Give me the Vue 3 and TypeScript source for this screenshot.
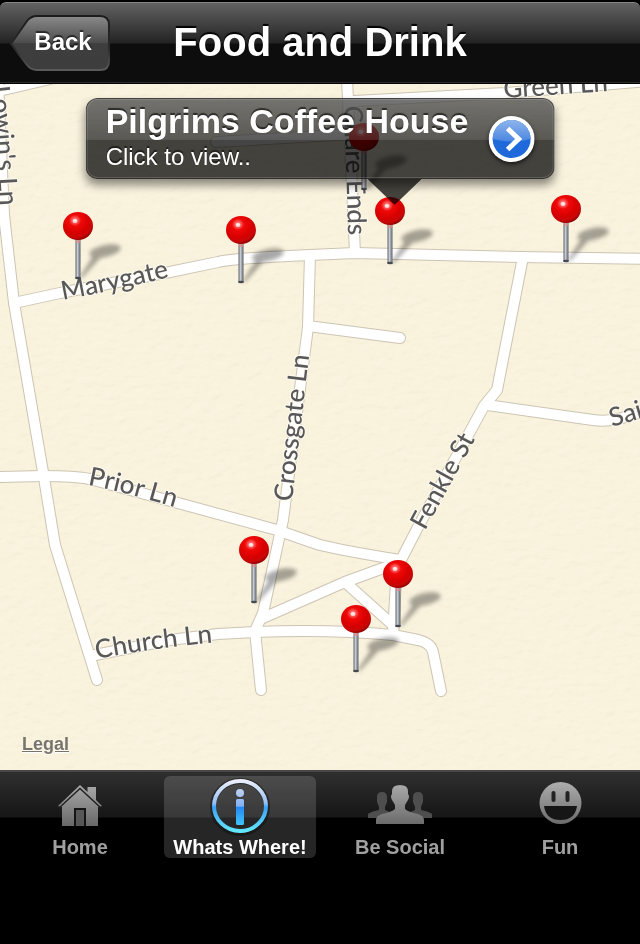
<script setup lang="ts">
interface Pin {
  x: number
  y: number
}

interface StreetLabel {
  id: string
  name: string
  path: string
}

interface Tab {
  id: string
  label: string
}

const roads: string[] = [
  'M-2 80 L4 215 L14 303 L44 478 L55 545 L97 680',
  'M-10 93 L50 79',
  'M14 303 L60 293 L170 272 L218 262 Q235 258 310 255 L355 253 L520 257 L650 259',
  'M347 78 L355 253',
  'M354 101 L505 93 L650 81',
  'M216 142 L354 134',
  'M310 255 L308 327 L283 520 L263 613 L255 631 L261 690',
  'M308 326 L400 338',
  'M523 257 L497 390 L484 406 L418 527 L402 558',
  'M487 405 L593 420 Q608 422 622 418 L650 409',
  'M-6 477 L43 476 Q75 476 90 479 L277 530 Q305 540 320 545 Q340 550 400 560',
  'M263 618 L345 582 L400 562',
  'M346 583 L394 626',
  'M397 562 L393 635',
  'M90 656 L170 640 L218 634 L255 632 Q330 629 393 635 L418 640 Q431 643 433 652 L441 691',
]

const labels: StreetLabel[] = [
  { id: 'marygate', name: 'Marygate', path: 'M63 300 Q118 290 190 272' },
  { id: 'prior', name: 'Prior Ln', path: 'M88 485 Q130 493 200 515' },
  { id: 'church', name: 'Church Ln', path: 'M97 659 Q150 648 240 640' },
  { id: 'crossgate', name: 'Crossgate Ln', path: 'M292 502 L312 330' },
  { id: 'fenkle', name: 'Fenkle St', path: 'M425 531 L490 412' },
  { id: 'saint', name: 'Saint', path: 'M612 427 L690 404' },
  { id: 'green', name: 'Green Ln', path: 'M504 98 L640 89' },
  { id: 'chare', name: 'Chare Ends', path: 'M344 106 L349 260' },
  { id: 'lowin', name: "Lowin's Ln", path: 'M-9 87 Q-4 130 1 230' },
]

const pins: Pin[] = [
  { x: 364, y: 137 },
  { x: 78, y: 226 },
  { x: 241, y: 230 },
  { x: 390, y: 211 },
  { x: 566, y: 209 },
  { x: 254, y: 550 },
  { x: 398, y: 574 },
  { x: 356, y: 619 },
]

const tabs: Tab[] = [
  { id: 'home', label: 'Home' },
  { id: 'info', label: 'Whats Where!' },
  { id: 'social', label: 'Be Social' },
  { id: 'fun', label: 'Fun' },
]

const activeTab = 'info'
</script>

<template>
  <div class="app">
    <header class="bar">
      <button class="back" type="button">
        <svg class="back-shape" viewBox="0 0 100 56" preserveAspectRatio="none" aria-hidden="true">
          <defs>
            <linearGradient id="backFill" x1="0" y1="0" x2="0" y2="1">
              <stop offset="0" stop-color="#8a8a8a" />
              <stop offset="0.5" stop-color="#4c4c4c" />
              <stop offset="0.51" stop-color="#3e3e3e" />
              <stop offset="1" stop-color="#3d3d3d" />
            </linearGradient>
            <linearGradient id="backEdge" x1="0" y1="0" x2="0" y2="1">
              <stop offset="0" stop-color="#1c1c1c" />
              <stop offset="0.6" stop-color="#2a2a2a" />
              <stop offset="1" stop-color="#5a5a5a" />
            </linearGradient>
          </defs>
          <path
            d="M1 29 L17 6 Q21 1 27 1 H90 Q99 1 99 10 V46 Q99 55 90 55 H27 Q21 55 17 50 Z"
            fill="url(#backFill)" stroke="url(#backEdge)" stroke-width="2"
          />
        </svg>
        <span class="back-text">Back</span>
      </button>
      <h1 class="title">Food and Drink</h1>
    </header>

    <main class="map">
      <svg class="map-canvas" viewBox="0 84 640 686" preserveAspectRatio="xMidYMin slice" role="img" aria-label="Street map">
        <defs>
          <filter id="paper" x="0" y="0" width="100%" height="100%">
            <feTurbulence type="fractalNoise" baseFrequency="0.08 0.14" numOctaves="3" seed="4" result="n" />
            <feDiffuseLighting in="n" surfaceScale="1" diffuseConstant="1.06" lighting-color="#fffdf4">
              <feDistantLight azimuth="235" elevation="72" />
            </feDiffuseLighting>
          </filter>
          <filter id="soft" x="-30%" y="-30%" width="160%" height="160%">
            <feGaussianBlur stdDeviation="2" />
          </filter>
          <radialGradient id="ball" cx="0.4" cy="0.3" r="0.72">
            <stop offset="0" stop-color="#ffd0d0" />
            <stop offset="0.1" stop-color="#ff7070" />
            <stop offset="0.28" stop-color="#f00808" />
            <stop offset="0.65" stop-color="#d60000" />
            <stop offset="0.85" stop-color="#c80808" />
            <stop offset="1" stop-color="#8c0000" />
          </radialGradient>
          <linearGradient id="needle" x1="0" y1="0" x2="1" y2="0">
            <stop offset="0" stop-color="#60646b" />
            <stop offset="0.4" stop-color="#c6cad2" />
            <stop offset="1" stop-color="#5a5e66" />
          </linearGradient>
          <path v-for="l in labels" :id="'street-' + l.id" :key="l.id" :d="l.path" />
        </defs>

        <rect x="0" y="84" width="640" height="686" fill="#f9f3e1" />
        <rect class="paper" x="0" y="84" width="640" height="686" filter="url(#paper)" />

        <g class="road-edge">
          <path v-for="r in roads" :key="r" :d="r" />
        </g>
        <g class="road">
          <path v-for="r in roads" :key="r" :d="r" />
        </g>

        <text v-for="l in labels" :key="l.id" class="street">
          <textPath :href="'#street-' + l.id">{{ l.name }}</textPath>
        </text>

        <g v-for="p in pins" :key="p.x" :transform="`translate(${p.x} ${p.y})`">
          <g filter="url(#soft)" fill="#000" opacity="0.34">
            <ellipse cx="27" cy="25" rx="16" ry="6" transform="rotate(-12 27 25)" />
            <path d="M1 52 L17 27 L25 29 L4 52 Z" />
          </g>
          <rect x="-2.5" y="12" width="5" height="40" fill="url(#needle)" />
          <ellipse cx="0" cy="52" rx="3" ry="1.3" fill="#454951" />
          <rect x="-2" y="13" width="4" height="4" fill="#e08a8a" opacity="0.7" />
          <ellipse cx="0" cy="0" rx="15" ry="14" fill="url(#ball)" />
          <ellipse cx="-3" cy="-5" rx="2.4" ry="2" fill="#fff" opacity="0.7" />
        </g>
      </svg>

      <section class="callout">
        <div class="callout-text">
          <h2 class="callout-title">Pilgrims Coffee House</h2>
          <p class="callout-sub">Click to view..</p>
        </div>
        <button class="disclose" type="button" aria-label="View details">
          <svg viewBox="0 0 46 46" aria-hidden="true">
            <defs>
              <linearGradient id="blueTop" x1="0" y1="0" x2="0" y2="1">
                <stop offset="0" stop-color="#8fb5ec" />
                <stop offset="1" stop-color="#4a86e0" />
              </linearGradient>
            </defs>
            <circle cx="23" cy="23" r="23" fill="#fff" />
            <circle cx="23" cy="23" r="19" fill="#1f69da" />
            <path d="M4 23 A19 19 0 0 1 42 23 Q23 28 4 23 Z" fill="url(#blueTop)" />
            <path d="M19 12.500 L30 23 L19 33.500" fill="none" stroke="#fff" stroke-width="5" />
          </svg>
        </button>
        <svg class="callout-tip" viewBox="0 0 54 26" aria-hidden="true">
          <path d="M0 0 H54 L28 25 Q27 26 26 25 Z" fill="#000" fill-opacity="0.73" />
        </svg>
      </section>

      <a class="legal" href="#legal">Legal</a>
    </main>

    <nav class="tabs">
      <button
        v-for="t in tabs" :key="t.id" type="button"
        class="tab" :class="{ active: t.id === activeTab }"
      >
        <svg v-if="t.id === 'home'" class="icon" viewBox="0 0 64 60" aria-hidden="true">
          <defs>
            <linearGradient id="metal" gradientUnits="userSpaceOnUse" x1="0" y1="8" x2="0" y2="50">
              <stop offset="0" stop-color="#aaaaaa" />
              <stop offset="1" stop-color="#686868" />
            </linearGradient>
          </defs>
          <path d="M32 9 L39.500 16 V11 H48 V24 L54 30 L50 31 V50 H14 V31 L10 30 Z" fill="url(#metal)" />
          <path d="M11 32 L32 12.500 L53 32" fill="none" stroke="#222" stroke-width="1.500" />
          <rect x="26" y="32" width="12" height="18" fill="#141414" />
          <rect x="28" y="34" width="8" height="16" fill="#575757" />
        </svg>
        <svg v-else-if="t.id === 'info'" class="icon" viewBox="0 0 64 60" aria-hidden="true">
          <defs>
            <linearGradient id="ring" gradientUnits="userSpaceOnUse" x1="0" y1="3" x2="0" y2="57">
              <stop offset="0" stop-color="#f1f3fb" />
              <stop offset="0.45" stop-color="#93c0f4" />
              <stop offset="0.52" stop-color="#3aa2f6" />
              <stop offset="1" stop-color="#66ecff" />
            </linearGradient>
            <linearGradient id="stem" gradientUnits="userSpaceOnUse" x1="0" y1="12" x2="0" y2="50">
              <stop offset="0" stop-color="#c3d4f5" />
              <stop offset="0.48" stop-color="#84b0f0" />
              <stop offset="0.5" stop-color="#2088f4" />
              <stop offset="1" stop-color="#45c8fb" />
            </linearGradient>
          </defs>
          <ellipse cx="32" cy="31" rx="27" ry="26" fill="none" stroke="#0d0d0d" stroke-width="6" opacity="0.5" />
          <ellipse cx="32" cy="30" rx="26" ry="25" fill="none" stroke="url(#ring)" stroke-width="4" />
          <circle cx="32" cy="17" r="4" fill="url(#stem)" />
          <rect x="28" y="23" width="8" height="26" rx="1.500" fill="url(#stem)" />
        </svg>
        <svg v-else-if="t.id === 'social'" class="icon" viewBox="0 0 64 60" aria-hidden="true">
          <g fill="#4e4e4e">
            <path d="M9 21 Q9 16 14 16 Q19 16 19 21 V26 L17 31 V34 L24 37 V42 H0 V38 Q2 36 11 34 V31 L9 26 Z" />
            <path d="M55 21 Q55 16 50 16 Q45 16 45 21 V26 L47 31 V34 L40 37 V42 H64 V38 Q62 36 53 34 V31 L55 26 Z" />
          </g>
          <path
            d="M24 15 Q24 9 32 9 Q40 9 40 15 V18 Q42 20 40 24 L37 29 V33 Q40 36 50 38 Q56 40 56 44 V48 H8 V44 Q8 40 14 38 Q24 36 27 33 V29 L24 24 Q22 20 24 18 Z"
            fill="url(#metal)"
          />
        </svg>
        <svg v-else class="icon" viewBox="0 0 64 60" aria-hidden="true">
          <circle cx="32.500" cy="27" r="21" fill="url(#metal)" />
          <rect x="23.500" y="15" width="4" height="11" rx="2" fill="#222" />
          <rect x="37.500" y="15" width="4" height="11" rx="2" fill="#222" />
          <path d="M16 30 H49 Q47 44 32.500 44 Q18 44 16 30 Z" fill="#161616" />
        </svg>
        <span class="tab-label">{{ t.label }}</span>
      </button>
    </nav>
  </div>
</template>

<style>
body {
  margin: 0;
  background: #000;
}
</style>

<style scoped>
.app {
  display: flex;
  flex-direction: column;
  min-height: 100vh;
  background: #000;
  font-family: "Liberation Sans", Arial, sans-serif;
}

button {
  border: 0;
  margin: 0;
  padding: 0;
  background: none;
  color: inherit;
  font-family: inherit;
}

.bar {
  display: grid;
  grid-template-columns: 1fr auto 1fr;
  align-items: center;
  height: 81px;
  padding: 0 10px;
  margin-top: 2px;
  box-sizing: border-box;
  border-top: 1px solid #858585;
  border-bottom: 1px solid #2c2c2c;
  border-radius: 6px 6px 0 0;
  background: linear-gradient(#626262 0, #232323 40px, #0d0d0d 41px, #0d0d0d 100%);
}

.back {
  position: relative;
  width: 100px;
  height: 56px;
}

.back-shape {
  display: block;
  width: 100%;
  height: 100%;
}

.back-text {
  position: absolute;
  inset: 0 0 2px 6px;
  display: flex;
  align-items: center;
  justify-content: center;
  color: #fff;
  font-size: 24px;
  font-weight: bold;
  text-shadow: 0 -2px 1px rgba(0, 0, 0, 0.6);
}

.title {
  grid-column: 2;
  margin: 0;
  padding-bottom: 2px;
  color: #fff;
  font-size: 40px;
  line-height: 48px;
  font-weight: bold;
  white-space: nowrap;
  text-shadow: 0 -2px 1px #000;
}

.map {
  position: relative;
  flex: 1;
  min-height: 400px;
  margin-top: 1px;
  overflow: hidden;
  background: #f8f1de;
}

.map-canvas {
  position: absolute;
  inset: 0;
  width: 100%;
  height: 100%;
}

.paper {
  mix-blend-mode: multiply;
  opacity: 0.35;
}

.road-edge path,
.road path {
  fill: none;
  stroke-linecap: round;
  stroke-linejoin: round;
}

.road-edge path {
  stroke: #cdc4b3;
  stroke-width: 12px;
}

.road path {
  stroke: #fff;
  stroke-width: 10px;
}

.street {
  fill: #58585a;
  stroke: #fdfaf0;
  stroke-width: 2px;
  stroke-linejoin: round;
  paint-order: stroke;
  font-family: Lato, "Open Sans", sans-serif;
  font-size: 26px;
  font-weight: 500;
}

.callout {
  position: absolute;
  top: 14px;
  left: 50%;
  transform: translateX(-50%);
  display: flex;
  align-items: center;
  gap: 20px;
  height: 81px;
  padding: 0 20px;
  box-sizing: border-box;
  border-radius: 12px;
  color: #fff;
  white-space: nowrap;
  background:
    linear-gradient(rgba(255, 255, 255, 0.26), rgba(255, 255, 255, 0.12)) 0 0 / 100% 42px no-repeat,
    rgba(0, 0, 0, 0.73);
  box-shadow:
    inset 0 0 0 1px rgba(0, 0, 0, 0.5),
    inset 0 0 0 2px rgba(255, 255, 255, 0.14),
    0 6px 10px rgba(0, 0, 0, 0.45);
}

.callout-title {
  margin: 0;
  font-size: 34px;
  line-height: 40px;
  font-weight: bold;
  text-shadow: 0 -2px 1px rgba(0, 0, 0, 0.6);
}

.callout-sub {
  margin: 0;
  padding-bottom: 4px;
  font-size: 24px;
  line-height: 32px;
  text-shadow: 0 -2px 1px rgba(0, 0, 0, 0.6);
}

.disclose {
  width: 46px;
  height: 46px;
  border-radius: 50%;
  box-shadow: 0 2px 4px rgba(0, 0, 0, 0.7);
}

.disclose svg {
  display: block;
}

.callout-tip {
  position: absolute;
  top: 100%;
  left: 282px;
  width: 54px;
  height: 26px;
}

.legal {
  position: absolute;
  left: 22px;
  bottom: 16px;
  color: #77746b;
  font-size: 18px;
  line-height: 20px;
  font-weight: bold;
  text-shadow: 0 1px 1px #fff;
}

.tabs {
  display: grid;
  grid-template-columns: repeat(4, 1fr);
  padding: 4px 0 86px;
  border-top: 2px solid #474747;
  background: linear-gradient(#2f2f2f 0, #161616 45px, #000 46px, #000 100%);
}

.tab {
  display: flex;
  flex-direction: column;
  align-items: center;
  margin: 0 4px;
  border-radius: 6px;
  color: #a0a0a0;
}

.tab.active {
  color: #fff;
  background: rgba(255, 255, 255, 0.15);
}

.icon {
  width: 64px;
  height: 60px;
}

.tab-label {
  font-size: 20px;
  line-height: 22px;
  font-weight: bold;
  white-space: nowrap;
}
</style>
